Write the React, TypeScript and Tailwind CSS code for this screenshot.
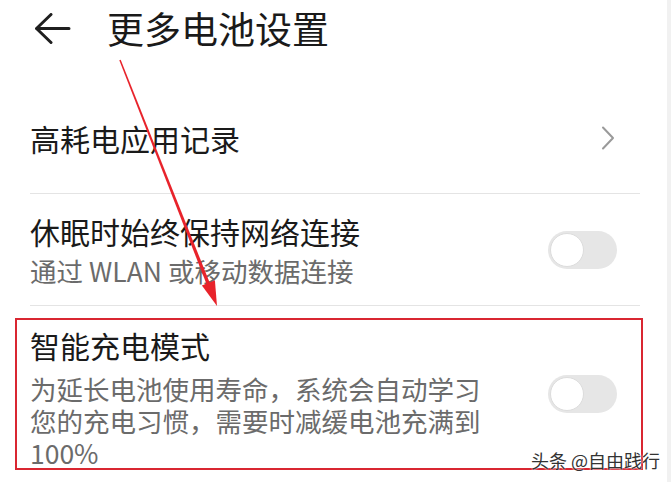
import React from "react";

function Toggle() {
  return (
    <div className="relative h-[38px] w-[69px] shrink-0 rounded-full bg-[#e6e6e6]">
      <div className="absolute left-[2px] top-[2px] h-[34px] w-[34px] rounded-full border border-[#dcdcdc] bg-white" />
    </div>
  );
}

function Chevron() {
  return (
    <svg width="14" height="24" viewBox="0 0 14 24" className="shrink-0">
      <path d="M2 1.5 L12 12 L2 22.5" fill="none" stroke="#9a9a9a" strokeWidth="2" strokeLinecap="round" strokeLinejoin="round" />
    </svg>
  );
}

export default function App() {
  return (
    <div
      className="relative flex h-[482px] w-[671px] overflow-hidden bg-white"
      style={{ fontFamily: "'Noto Sans CJK SC', 'Noto Sans', sans-serif" }}
    >
      <div className="flex flex-1 flex-col">
        {/* header */}
        <div className="flex h-[82px] items-start pl-[35px] pt-[6px]">
          <svg width="36" height="32" viewBox="0 0 36 32" className="mt-[7px] shrink-0">
            <path d="M16 1.5 L1.5 15.5 L16 29.5 M1.5 15.5 L34 15.5" fill="none" stroke="#1f1f1f" strokeWidth="3" strokeLinecap="round" strokeLinejoin="round" />
          </svg>
          <div className="ml-[36px] text-[37px] leading-[44px] text-[#1a1a1a]">更多电池设置</div>
        </div>

        {/* 高耗电应用记录 */}
        <div className="ml-[30px] mr-[27px] flex h-[112px] items-center justify-between border-b border-[#e4e4e4] pr-[25px]">
          <div className="text-[30px] leading-[40px] text-[#1a1a1a]">高耗电应用记录</div>
          <Chevron />
        </div>

        {/* 休眠时始终保持网络连接 */}
        <div className="ml-[30px] mr-[27px] flex h-[112px] items-center justify-between border-b border-[#e4e4e4] pr-[23px]">
          <div className="pb-[2px]">
            <div className="text-[30px] leading-[44px] text-[#1a1a1a]">休眠时始终保持网络连接</div>
            <div className="text-[26.5px] leading-[36px] text-[#6b6b6b]">通过 WLAN 或移动数据连接</div>
          </div>
          <Toggle />
        </div>

        {/* 智能充电模式 */}
        <div className="ml-[15px] mt-[12px] flex h-[152px] w-[628px] items-center justify-between border-2 border-[#d92631] pl-[13px] pr-[24px]">
          <div className="self-start pt-[1px]">
            <div className="text-[30px] leading-[48px] text-[#1a1a1a]">智能充电模式</div>
            <div className="mt-[4px] text-[26.5px] leading-[32px] text-[#6b6b6b]">
              <div>为延长电池使用寿命，系统会自动学习</div>
              <div>您的充电习惯，需要时减缓电池充满到</div>
              <div>100%</div>
            </div>
          </div>
          <Toggle />
        </div>
      </div>
      <div className="w-[4px] shrink-0 bg-[#f1f1f1]" />

      {/* annotation arrow */}
      <svg className="pointer-events-none absolute left-0 top-0" width="671" height="482" viewBox="0 0 671 482">
        <polygon points="119.3,60.3 120.7,59.7 210.0,283.5 206.8,284.8" fill="#e8232b" />
        <polygon points="217,306 201.9,285.4 214.9,280.2" fill="#e8232b" />
      </svg>

      {/* watermark */}
      <div
        className="absolute bottom-[11px] right-[11px] text-[18px] leading-[22px] text-[#333333]"
        style={{ textShadow: "0 0 2px #fff, 0 0 2px #fff" }}
      >
        头条 @自由践行
      </div>
    </div>
  );
}
